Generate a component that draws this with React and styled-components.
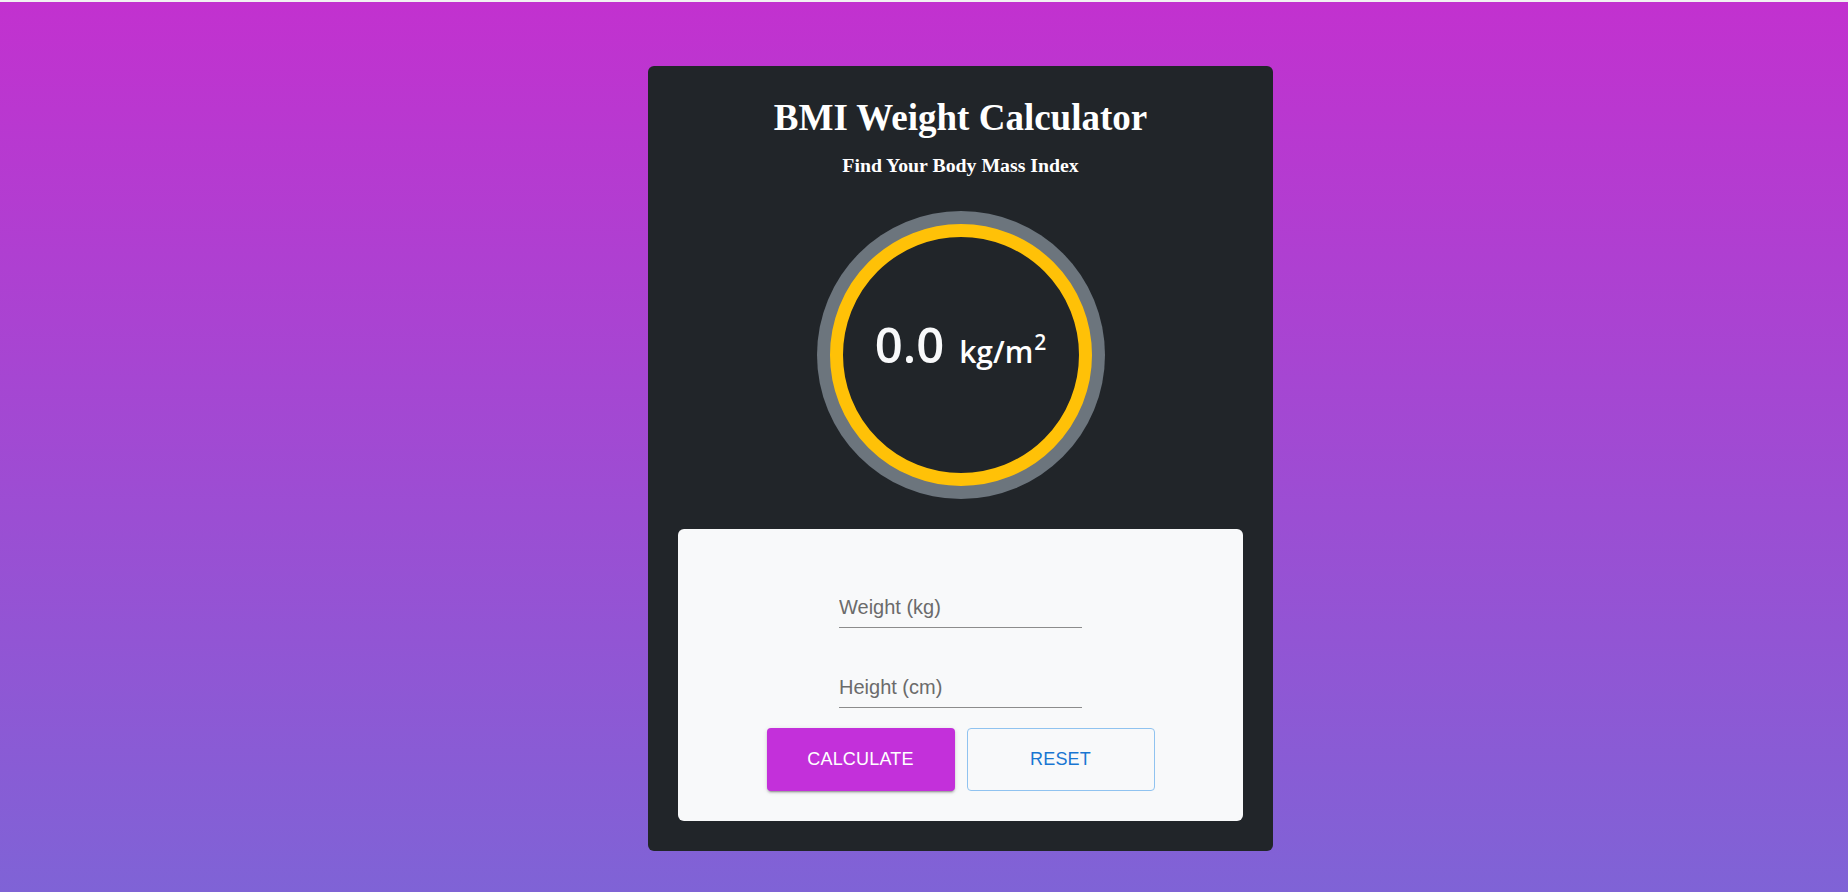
import styled, { createGlobalStyle } from "styled-components"

const GlobalStyle = createGlobalStyle`
  * {
    box-sizing: border-box;
  }
  html, body {
    margin: 0;
    padding: 0;
    background: #f1f1f1;
  }
  body {
    padding-top: 2px;
    font-family: "Liberation Sans", Arial, sans-serif;
  }
`

function App() {
  return (
    <>
      <GlobalStyle />
      <Page>
        <Card>
          <Title>BMI Weight Calculator</Title>
          <Subtitle>Find Your Body Mass Index</Subtitle>
          <Gauge>
            <GaugeInner>
              <Value>0.0</Value>
              <Unit>
                kg/m<sup>2</sup>
              </Unit>
            </GaugeInner>
          </Gauge>
          <Panel>
            <Field type="number" placeholder="Weight (kg)" />
            <Field type="number" placeholder="Height (cm)" $gap={44} />
            <Actions>
              <PrimaryButton>CALCULATE</PrimaryButton>
              <OutlineButton>RESET</OutlineButton>
            </Actions>
          </Panel>
        </Card>
      </Page>
    </>
  )
}

const Page = styled.main`
  min-height: calc(100vh - 2px);
  display: flex;
  justify-content: center;
  align-items: flex-start;
  padding: 64px 0 41px 73px;
  background: linear-gradient(to bottom, #c231cf 0%, #7f63d6 100%);
`

const Card = styled.section`
  width: 625px;
  background: #212529;
  border-radius: 6px;
  padding: 31px 30px 30px;
  display: flex;
  flex-direction: column;
  align-items: center;
  color: #fff;
`

const Title = styled.h1`
  margin: 0;
  font-family: "Liberation Serif", "Times New Roman", serif;
  font-size: 37px;
  font-weight: 700;
  line-height: 41px;
`

const Subtitle = styled.h3`
  margin: 16px 0 0;
  font-family: "Liberation Serif", "Times New Roman", serif;
  font-size: 19.8px;
  font-weight: 700;
  line-height: 22px;
`

const Gauge = styled.div`
  margin: 35px 0 30px;
  width: 288px;
  height: 288px;
  border-radius: 50%;
  background: #6c757d;
  padding: 13px;
`

const GaugeInner = styled.div`
  width: 100%;
  height: 100%;
  border-radius: 50%;
  border: 13px solid #ffc107;
  background: #212529;
  display: flex;
  align-items: baseline;
  justify-content: center;
  gap: 15px;
  padding-top: 78px;
  font-family: "Open Sans", "Noto Sans", sans-serif;
`

const Value = styled.span`
  font-size: 49px;
  font-weight: 600;
  line-height: 1.2;
  color: #f8f9fa;
`

const Unit = styled.span`
  font-size: 30px;
  font-weight: 600;
  line-height: 1.2;

  sup {
    font-size: 0.7em;
    line-height: 0;
    vertical-align: 0.62em;
    margin-left: 1px;
  }
`

const Panel = styled.div`
  align-self: stretch;
  background: #f8f9fa;
  border-radius: 6px;
  padding: 63px 30px 30px;
  display: flex;
  flex-direction: column;
  align-items: center;
`

const Field = styled.input`
  width: 243px;
  margin-top: ${(p) => (p.$gap ? `${p.$gap}px` : "0")};
  padding: 4px 0 8px;
  border: none;
  border-bottom: 1px solid #8c8c8c;
  background: transparent;
  font-family: "Liberation Sans", Arial, sans-serif;
  font-size: 20px;
  line-height: 23px;
  color: #333;
  outline: none;

  &::placeholder {
    color: #6b6b6b;
    opacity: 1;
  }
`

const Actions = styled.div`
  margin-top: 20px;
  display: flex;
  gap: 12px;
`

const BaseButton = styled.button`
  width: 188px;
  height: 63px;
  border-radius: 4px;
  font-family: "Liberation Sans", Arial, sans-serif;
  font-size: 18px;
  font-weight: 400;
  letter-spacing: 0.2px;
  cursor: pointer;
`

const PrimaryButton = styled(BaseButton)`
  border: none;
  background: #c330da;
  color: #fff;
  box-shadow: 0 3px 1px -2px rgba(0, 0, 0, 0.2), 0 2px 2px 0 rgba(0, 0, 0, 0.14),
    0 1px 5px 0 rgba(0, 0, 0, 0.12);
`

const OutlineButton = styled(BaseButton)`
  border: 1px solid #90c3f0;
  background: transparent;
  color: #1976d2;
`

export default App
